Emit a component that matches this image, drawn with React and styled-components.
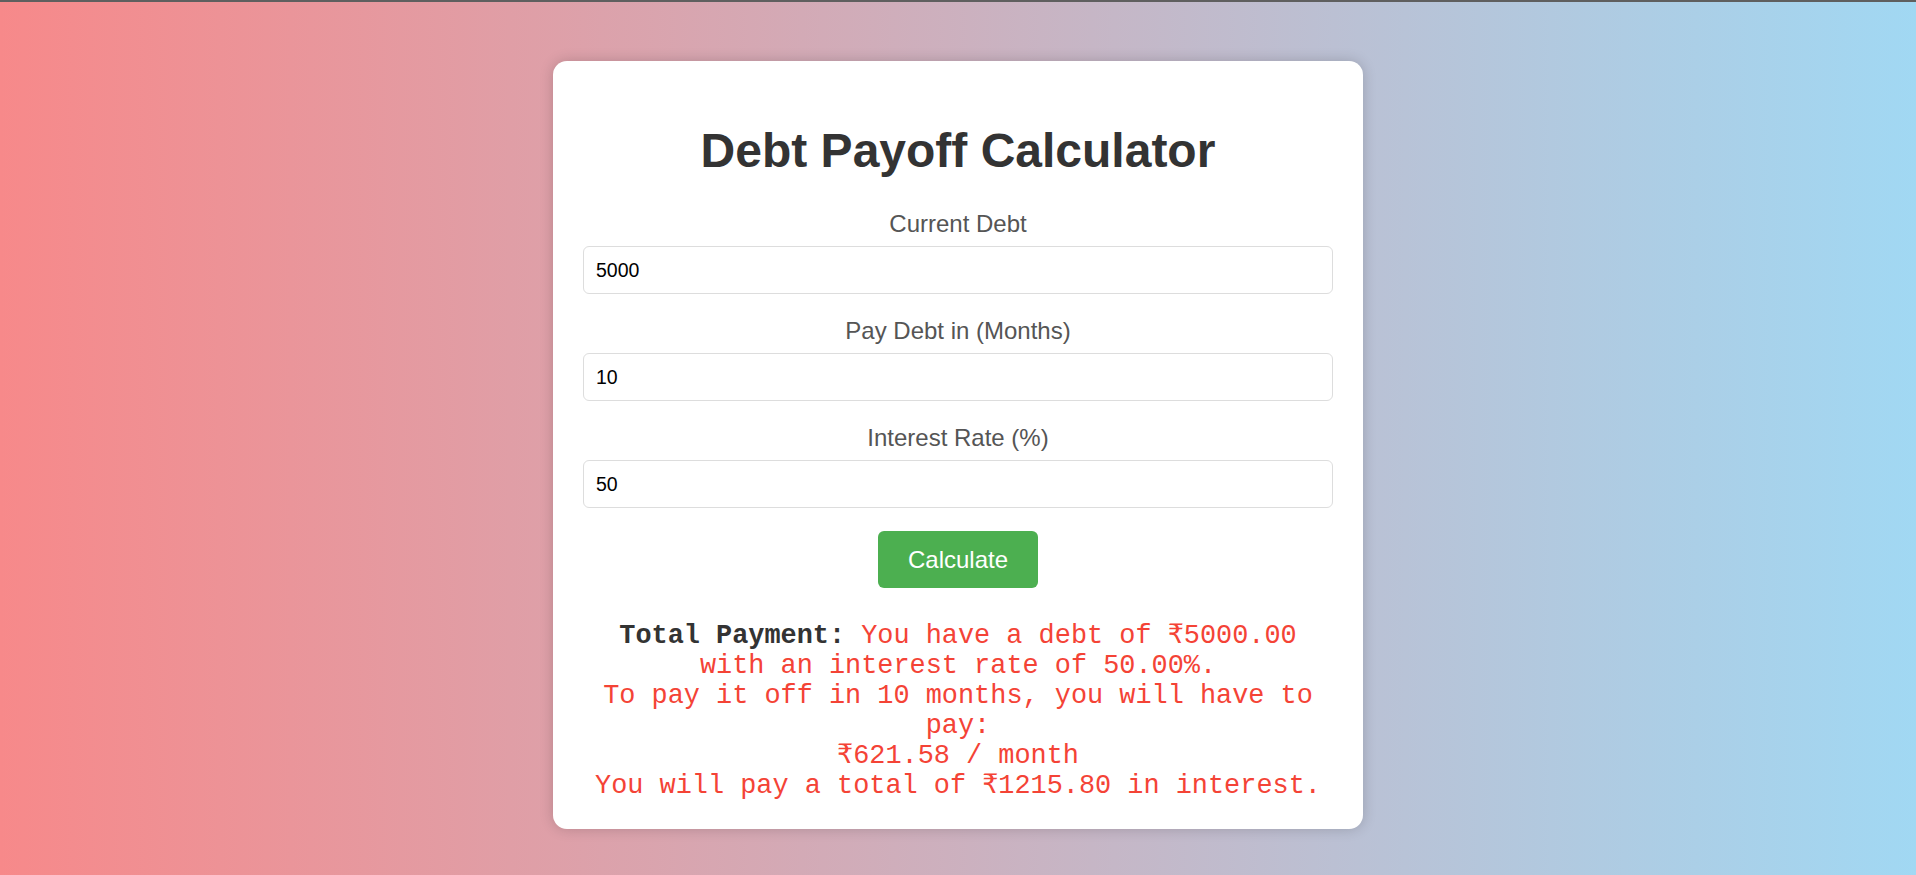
import React, { useState } from "react";
import styled, { createGlobalStyle } from "styled-components";

const GlobalStyle = createGlobalStyle`
   html, body {
      margin: 0;
      padding: 0;
   }
   body {
      font-family: "Liberation Sans", Arial, sans-serif;
   }
   * {
      box-sizing: border-box;
   }
`
const Page = styled.div`
   min-height: 100vh;
   border-top: 2px solid #5f5f5f;
   background: linear-gradient(to right, #f7898a, #a1d8f3);
   display: flex;
   justify-content: center;
   align-items: flex-start;
   padding-top: 59px;
`
const Card = styled.div`
   width: 810px;
   background: #fff;
   border-radius: 14px;
   box-shadow: 0 0 14px rgba(0, 0, 0, 0.18);
   padding: 30px 30px 28px;
   display: flex;
   flex-direction: column;
   align-items: stretch;
`
const Title = styled.h1`
   margin: 32px 0;
   color: #333;
   font-size: 48px;
   line-height: 55px;
   font-weight: 700;
   text-align: center;
`
const Field = styled.div`
   display: flex;
   flex-direction: column;
   gap: 8px;
   margin-bottom: 23px;
`
const Label = styled.label`
   color: #555;
   font-size: 24px;
   line-height: 28px;
   text-align: center;
`
const Input = styled.input`
   width: 100%;
   height: 48px;
   padding: 0 12px;
   border: 1px solid #ddd;
   border-radius: 6px;
   font-family: "Liberation Sans", Arial, sans-serif;
   font-size: 19.5px;
   color: #000;
   outline: none;
`
const Button = styled.button`
   align-self: center;
   height: 57px;
   padding: 0 30px;
   border: none;
   border-radius: 6px;
   background: #4caf50;
   color: #fff;
   font-family: "Liberation Sans", Arial, sans-serif;
   font-size: 24px;
   cursor: pointer;
`
const Result = styled.div`
   margin-top: 33px;
   text-align: center;
   font-family: "Liberation Mono", "Courier New", "DejaVu Sans Mono", monospace;
   font-size: 26.88px;
   line-height: 30px;
   color: #333;
   & > strong {
      font-weight: 700;
   }
`
const Message = styled.span`
   color: #f44336;
`

const fields = [
   { key: "debt", label: "Current Debt" },
   { key: "months", label: "Pay Debt in (Months)" },
   { key: "rate", label: "Interest Rate (%)" },
]

const App = () => {
   const [values, setValues] = useState({ debt: "5000", months: "10", rate: "50" })

   return (
      <>
         <GlobalStyle />
         <Page>
            <Card>
               <Title>Debt Payoff Calculator</Title>
               {fields.map((f) => (
                  <Field key={f.key}>
                     <Label htmlFor={f.key}>{f.label}</Label>
                     <Input
                        id={f.key}
                        type="number"
                        value={values[f.key]}
                        onChange={(e) => setValues({ ...values, [f.key]: e.target.value })}
                     />
                  </Field>
               ))}
               <Button>Calculate</Button>
               <Result>
                  <strong>Total Payment:</strong>{" "}
                  <Message>
                     You have a debt of ₹5000.00 with an interest rate of 50.00%.
                     <br />
                     To pay it off in 10 months, you will have to pay:
                     <br />
                     ₹621.58 / month
                     <br />
                     You will pay a total of ₹1215.80 in interest.
                  </Message>
               </Result>
            </Card>
         </Page>
      </>
   )
}

export default App
